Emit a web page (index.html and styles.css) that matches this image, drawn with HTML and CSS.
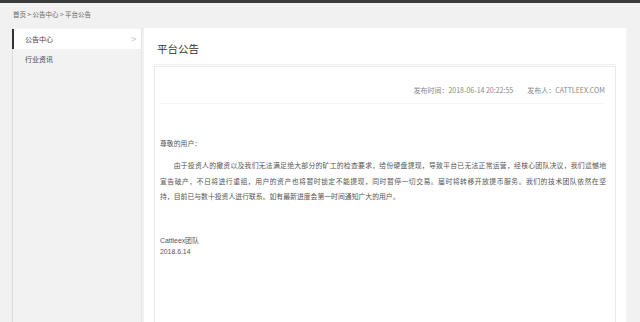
FILE: index.html
```html
<!DOCTYPE html>
<html lang="zh">
<head>
<meta charset="utf-8">
<title>平台公告</title>
<link rel="stylesheet" href="styles.css">
</head>
<body>
<div class="topbar"></div>
<div class="crumbs">首页 &gt; 公告中心 &gt; 平台公告</div>
<div class="layout">
  <aside class="side">
    <a class="side-item active">公告中心<span class="arrow">&gt;</span></a>
    <a class="side-item">行业资讯</a>
  </aside>
  <main class="main">
    <h1 class="title">平台公告</h1>
    <section class="article">
      <div class="meta"><span>发布时间：2018-06-14 20:22:55</span><span>发布人：CATTLEEX.COM</span></div>
      <div class="body">
        <p class="greet">尊敬的用户：</p>
        <p class="para"><span class="ln first">由于投资人的撤资以及我们无法满足绝大部分的矿工的检查要求，给份硬盘提现，导致平台已无法正常运营，经核心团队决议，我们遗憾地</span><span class="ln">宣告破产，不日将进行重组，用户的资产也将暂时锁定不能提现，同时暂停一切交易。届时将转移开放提币服务。我们的技术团队依然在坚</span><span class="ln last">持，目前已与数十投资人进行联系。如有最新进度会第一时间通知广大的用户。</span></p>
        <p class="sign">Cattleex团队<br>2018.6.14</p>
      </div>
    </section>
  </main>
  <div class="gutter"></div>
</div>
</body>
</html>
```
FILE: styles.css
```css
html, body {
  margin: 0;
  padding: 0;
  height: 100%;
}
body {
  background: #f1f1f1;
  font-family: "Noto Sans CJK SC", "Noto Sans", sans-serif;
  color: #333;
  overflow: hidden;
}
.topbar {
  height: 3px;
  background: #3b3b3b;
}
.crumbs {
  height: 25px;
  line-height: 23px;
  padding-left: 13px;
  font-size: 6.5px;
  color: #666;
}
.layout {
  display: flex;
  height: 294px;
}
.side {
  width: 128px;
  flex-shrink: 0;
  margin-left: 12px;
  background: #f2f2f2;
  border-left: 1px solid #dcdcdc;
  border-right: 1px solid #e6e6e6;
  padding-top: 1px;
}
.side-item {
  display: flex;
  align-items: center;
  justify-content: space-between;
  height: 20px;
  padding: 0 4px 0 12px;
  font-size: 7px;
  color: #444;
}
.side-item.active {
  background: #fff;
  border-left: 2px solid #333;
  margin-left: -1px;
  padding-left: 11px;
}
.arrow {
  color: #ccc;
  font-size: 8px;
  font-family: "DejaVu Sans", sans-serif;
}
.main {
  flex: 1;
  min-width: 0;
  margin-left: 2px;
  background: #fff;
  padding: 0 9px 0 10px;
  display: flex;
  flex-direction: column;
}
.title {
  margin: 0;
  height: 36px;
  line-height: 41px;
  padding-left: 3px;
  font-size: 10.5px;
  font-weight: normal;
  color: #333;
  border-bottom: 1px solid #f0f0f0;
}
.article {
  flex: 1;
  margin-top: 1px;
  border: 1px solid #e9e9e9;
  border-bottom: none;
  padding: 0 10px 0 5px;
}
.meta {
  display: flex;
  justify-content: flex-end;
  gap: 14px;
  height: 36px;
  line-height: 46px;
  font-size: 7px;
  color: #888;
  border-bottom: 1px solid #f6f6f6;
}
.body {
  font-size: 6.85px;
  color: #555;
  width: 446px;
}
.greet {
  margin: 33px 0 0;
  line-height: 12px;
}
.para {
  margin: 9px 0 0;
  line-height: 15.5px;
}
.ln {
  display: block;
  text-align: justify;
  text-align-last: justify;
}
.ln.first {
  text-indent: 2em;
}
.ln.last {
  text-align-last: left;
}
.sign {
  margin: 30px 0 0;
  line-height: 11px;
  font-family: "Liberation Sans", "Noto Sans CJK SC", sans-serif;
}
.gutter {
  width: 13px;
  flex-shrink: 0;
  border-left: 2px solid #f8f8f8;
}
```
